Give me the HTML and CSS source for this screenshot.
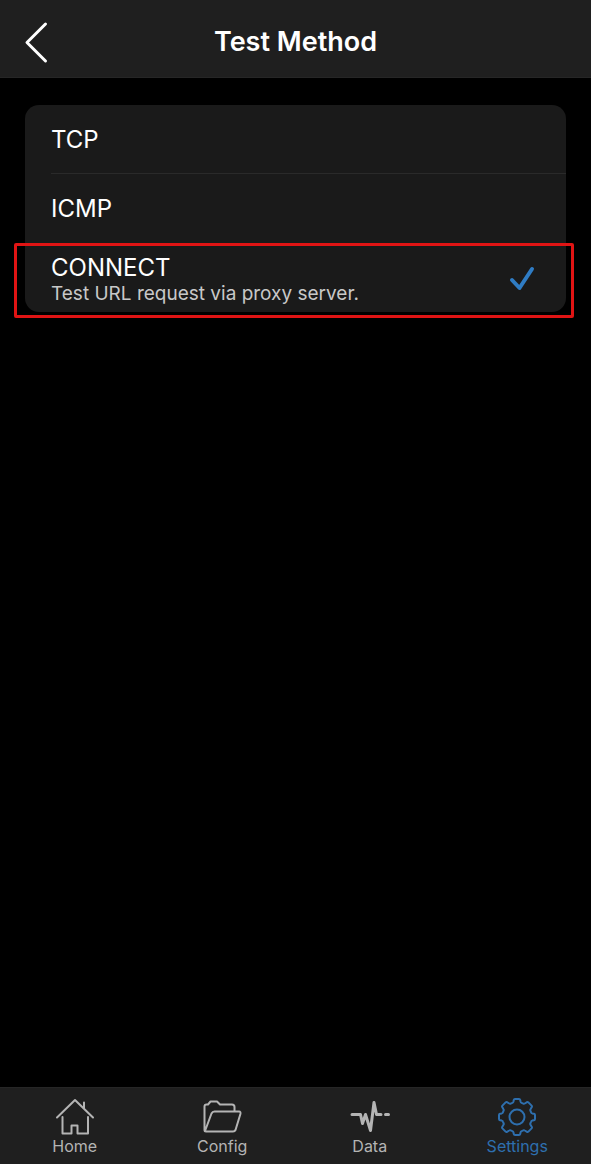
FILE: index.html
```html
<!DOCTYPE html>
<html lang="en">
<head>
<meta charset="utf-8">
<meta name="viewport" content="width=device-width, initial-scale=1">
<title>Test Method</title>
<link rel="stylesheet" href="styles.css">
</head>
<body class="screen">
<header class="navbar">
  <button class="back" type="button" aria-label="Back">
    <svg class="back-icon" viewBox="0 0 24 44" aria-hidden="true"><path d="M21.500 4 3 22.500 21.500 41"/></svg>
  </button>
  <h1 class="title">Test Method</h1>
</header>

<main class="content">
  <form class="card">
    <label class="row">
      <span class="name">TCP</span>
      <input class="choice" type="radio" name="method" value="tcp">
      <svg class="check" viewBox="0 0 28 28" aria-hidden="true"><path d="M4 16 11.500 24 24 5"/></svg>
    </label>
    <label class="row">
      <span class="name">ICMP</span>
      <input class="choice" type="radio" name="method" value="icmp">
      <svg class="check" viewBox="0 0 28 28" aria-hidden="true"><path d="M4 16 11.500 24 24 5"/></svg>
    </label>
    <label class="row row-marked">
      <span class="text">
        <span class="name">CONNECT</span>
        <span class="detail">Test URL request via proxy server.</span>
      </span>
      <input class="choice" type="radio" name="method" value="connect" checked>
      <svg class="check" viewBox="0 0 28 28" aria-hidden="true"><path d="M4 16 11.500 24 24 5"/></svg>
    </label>
  </form>
</main>

<nav class="tabs">
  <a class="tab" href="#home">
    <svg class="tab-icon" viewBox="0 0 40 40" aria-hidden="true"><path d="M2 20.500 20 3 38 20.500M29 11.500V5.500M7.500 20V36.500H16.500V28.500H22.500V36.500H33V20"/></svg>
    Home
  </a>
  <a class="tab" href="#config">
    <svg class="tab-icon" viewBox="0 0 40 40" aria-hidden="true"><path d="M2.500 33V9.500Q2.500 7.500 4.500 7.500H6L8.500 4.500H15L18 7.500H30Q32.500 7.500 32.500 10V14M3 34 9.500 16.500Q10.500 14.500 12.500 14.500H37Q39 14.500 38.400 17L33.500 33Q32.800 34.500 31 34.500H4Q2.500 34.500 2.500 33"/></svg>
    Config
  </a>
  <a class="tab" href="#data">
    <svg class="tab-icon" viewBox="0 0 40 40" aria-hidden="true"><path class="pulse" d="M2 17.500H10.500L12.500 26.500 15.500 17.500 20.500 33.500 24 5.500 26.500 17.500H31M35.500 17.500H38.500"/></svg>
    Data
  </a>
  <a class="tab tab-current" href="#settings" aria-current="page">
    <svg class="tab-icon" viewBox="-20 -20 40 40" aria-hidden="true"><path d="M-2-18H2Q3-18 3.200-17L3.600-15.200Q3.800-14.400 4.600-14.100L6.300-13.400Q7-13 7.800-13.500L10-14.800Q10.700-15.200 11.400-14.600L14.600-11.400Q15.200-10.700 14.800-10L13.500-7.800Q13-7 13.400-6.300L14.100-4.600Q14.400-3.800 15.200-3.600L17-3.200Q18-3 18-2V2Q18 3 17 3.200L15.200 3.600Q14.400 3.800 14.100 4.600L13.400 6.300Q13 7 13.500 7.800L14.800 10Q15.200 10.700 14.600 11.400L11.400 14.600Q10.700 15.200 10 14.800L7.800 13.500Q7 13 6.300 13.400L4.600 14.100Q3.800 14.400 3.600 15.200L3.200 17Q3 18 2 18H-2Q-3 18-3.200 17L-3.600 15.200Q-3.800 14.400-4.600 14.100L-6.300 13.400Q-7 13-7.800 13.500L-10 14.800Q-10.700 15.200-11.400 14.600L-14.600 11.400Q-15.200 10.700-14.800 10L-13.500 7.800Q-13 7-13.400 6.300L-14.100 4.600Q-14.400 3.800-15.200 3.600L-17 3.200Q-18 3-18 2V-2Q-18-3-17-3.200L-15.200-3.600Q-14.400-3.800-14.100-4.600L-13.400-6.300Q-13-7-13.500-7.800L-14.800-10Q-15.200-10.700-14.600-11.400L-11.400-14.600Q-10.700-15.200-10-14.800L-7.800-13.500Q-7-13-6.300-13.400L-4.600-14.100Q-3.800-14.400-3.600-15.200L-3.200-17Q-3-18-2-18Z"/><circle r="7.500"/></svg>
    Settings
  </a>
</nav>
</body>
</html>
```

FILE: styles.css
```css
* {
  box-sizing: border-box;
}

.screen {
  margin: 0;
  min-height: 100vh;
  display: flex;
  flex-direction: column;
  background: #000;
  color: #fff;
  font-family: Inter, "Liberation Sans", sans-serif;
}

svg {
  fill: none;
  stroke: currentColor;
  stroke-linecap: round;
  stroke-linejoin: round;
}

.navbar {
  display: grid;
  grid-template-columns: 48px 1fr 48px;
  align-items: center;
  padding: 20px 0 13px;
  background: #1f1f1f;
  border-bottom: 1px solid #262626;
}

.back {
  display: flex;
  justify-content: flex-end;
  padding: 0;
  border: 0;
  background: none;
  color: #fff;
}

.back-icon {
  width: 24px;
  height: 44px;
  stroke-width: 3;
}

.title {
  margin: 0;
  font-size: 27px;
  line-height: 44px;
  font-weight: 600;
  text-align: center;
}

.content {
  flex: 1;
  padding: 27px 25px;
}

.card {
  background: #1a1a1a;
  border-radius: 14px;
}

.row {
  position: relative;
  display: flex;
  align-items: center;
  justify-content: space-between;
  min-height: 69px;
  padding: 0 30px 0 26px;
}

.row:first-child::after {
  content: "";
  position: absolute;
  inset: auto 0 0 26px;
  height: 1px;
  background: #2a2a2a;
}

.row-marked::before {
  content: "";
  position: absolute;
  inset: 0 -8px -6px -11px;
  border: 3px solid #e01414;
  border-radius: 2px;
}

.text {
  display: flex;
  flex-direction: column;
  padding-top: 2px;
}

.name {
  font-size: 24px;
  line-height: 30px;
}

.detail {
  font-size: 19px;
  line-height: 22px;
  color: #c8c8c8;
}

.choice {
  appearance: none;
  position: absolute;
  inset: 0;
  margin: 0;
  outline: 0;
}

.check {
  display: none;
  width: 28px;
  height: 28px;
  color: #2f7cc4;
  stroke-width: 4;
}

.choice:checked + .check {
  display: block;
}

.tabs {
  display: grid;
  grid-template-columns: repeat(4, 1fr);
  padding: 9px 0 9px 1px;
  background: #1f1f1f;
  border-top: 1px solid #262626;
}

.tab {
  display: flex;
  flex-direction: column;
  align-items: center;
  color: #b4b4b4;
  font-size: 16px;
  line-height: 18px;
  text-decoration: none;
}

.tab-current {
  color: #2e6fae;
}

.tab-icon {
  width: 40px;
  height: 40px;
  stroke-width: 2;
}

.pulse {
  stroke-width: 3;
}
```
